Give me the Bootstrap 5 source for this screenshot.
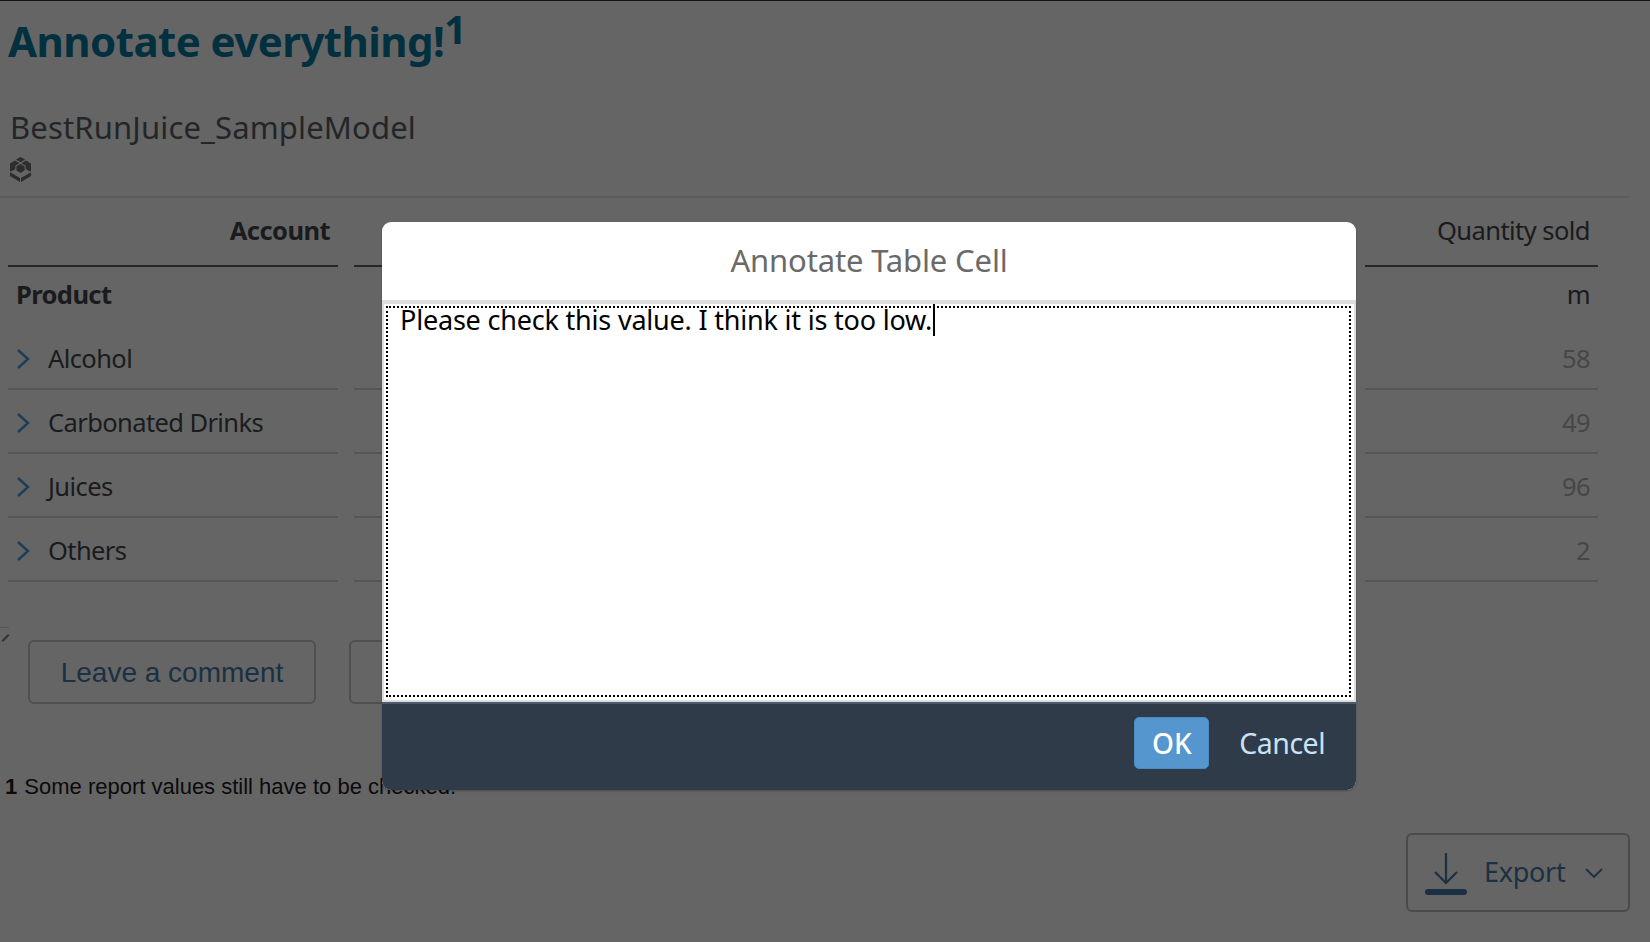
<!DOCTYPE html>
<html lang="en">
<head>
    <meta charset="UTF-8">
    <meta name="viewport" content="width=device-width, initial-scale=1.0">
    <title>Annotate everything!</title>
    <link href="https://cdn.jsdelivr.net/npm/bootstrap@5.3.0/dist/css/bootstrap.min.css" rel="stylesheet">
    <style>
        html, body { height: 100%; }
        body { background: #656565; font-family: "Noto Sans", "Open Sans", sans-serif; color: #191b1d; overflow: hidden; border-top: 1px solid #111; }
        .page-area { height: 941px; position: relative; padding: 15px 0 0 8px; }
        .story-title { font-size: 42px; font-weight: 700; color: #03303f; line-height: 50px; margin: 0; letter-spacing: -.55px; }
        .story-title sup { font-size: 39px; top: -.33em; line-height: 0; font-weight: 700; }
        .model-name { font-size: 31px; line-height: 40px; color: #232527; margin: 41px 0 0 2px; letter-spacing: .15px; }
        .model-icon { display: block; margin: 10px 0 0 2px; }
        .head-rule { height: 2px; background: #5c5c5c; margin: 14px 21px 0 -8px; }
        .data-grid { display: grid; grid-template-columns: 330px 1fr 233px; column-gap: 16px; width: 1590px; }
        .grid-col { min-width: 0; }
        .head-cell { height: 69px; border-bottom: 2px solid #22282d; display: flex; align-items: center; justify-content: flex-end; padding: 0 8px 3px; font-size: 25.5px; letter-spacing: -.55px; }
        .head-cell.account { font-weight: 700; }
        .row-cell { height: 64px; display: flex; align-items: center; padding: 3px 8px 0; font-size: 25.5px; letter-spacing: -.6px; border-bottom: 2px solid #565656; }
        .row-cell.unit { border-bottom: 0; height: 59px; font-weight: 700; padding: 0 8px 4px; }
        .row-cell.value { justify-content: flex-end; color: #454749; }
        .row-cell svg { margin-right: 17px; flex: none; }
        .action-row { display: flex; gap: 33px; margin: 58px 0 0 20px; }
        .action-btn { height: 64px; width: 288px; background: transparent; border: 2px solid #4f4f4f; border-radius: 6px; color: #1b3042; font-family: "Liberation Sans", Arial, sans-serif; font-size: 28px; padding: 1px 0 0; }
        .footnote { font-family: "Liberation Sans", Arial, sans-serif; font-size: 22px; line-height: 26px; color: #0b0b0b; margin: 70px 0 0 -3px; }
        .footnote b { margin-right: 1px; }
        .export-btn { position: absolute; right: 20px; top: 832px; width: 224px; height: 79px; border: 2px solid #4b4b4b; border-radius: 6px; color: #1b3042; font-size: 27px; letter-spacing: -.3px; background: transparent; padding: 0 0 0 16px; }
        .export-chevron { margin-left: 19px; }
        .tick-mark { position: absolute; left: 1px; top: 636px; width: 9px; height: 2px; background: #333; transform: rotate(-45deg); }
        .tick-line { position: absolute; left: 0; top: 626px; width: 9px; height: 1px; background: #555; }
        .annotate-dialog { position: absolute; left: 382px; top: 221px; width: 974px; height: 568px; border-radius: 9px; overflow: hidden; background: #fff; display: flex; flex-direction: column; box-shadow: 0 1px 2px rgba(0,0,0,.25); }
        .dialog-title { height: 78px; display: flex; align-items: center; justify-content: center; font-size: 31px; color: #6a6a6a; letter-spacing: -.15px; padding-bottom: 2px; flex: none; }
        .dialog-body { flex: 1; border-top: 4px solid #dedede; border-left: 2px solid #ddd; border-right: 2px solid #ddd; border-bottom: 2px solid #ddd; padding: 2px 3px 3px 2px; min-height: 0; }
        .dialog-editor { height: 100%; border: 2px dotted #000; font-size: 27px; line-height: 24px; padding: 0 12px; color: #000; letter-spacing: -.2px; }
        .caret-bar { display: inline-block; width: 2px; height: 32px; background: #000; vertical-align: top; margin: -4px 0 0 1px; }
        .dialog-foot { height: 88px; background: #2f3b49; border-top: 2px solid #4c5b6b; display: flex; align-items: center; justify-content: flex-end; padding: 0 31px 8px 0; gap: 30px; flex: none; }
        .ok-btn { width: 75px; height: 52px; background: #5496cd; border: 1px solid #4a8bc2; border-radius: 5px; color: #fff; font-size: 28px; padding: 0; line-height: 1; font-weight: 500; }
        .ok-btn:hover { background: #5496cd; color: #fff; }
        .cancel-btn { color: #c9e2f7; font-size: 28.5px; letter-spacing: -.5px; }
    </style>
</head>
<body>
    <div class="page-area">
        <h1 class="story-title">Annotate everything!<sup>1</sup></h1>
        <div class="model-name">BestRunJuice_SampleModel</div>
        <svg class="model-icon" width="21" height="25" viewBox="0 0 21 25">
            <path fill="#2d2d2d" d="M10.5 0 15 2.6 10.5 5.2 6 2.6ZM5 3.6 9.6 6.2 5.4 8.6 5.4 12 1 14.5 0 14V6.5ZM16 3.6 21 6.5V14L20 14.5 15.6 12V8.6L11.4 6.2ZM6.4 9.3 10.5 7 14.6 9.3V13.6L10.5 16 6.4 13.6ZM0 15.4 1 15.7 10 21V25L0 19ZM21 15.4V19L11 25V21L20 15.7Z"/>
        </svg>
        <div class="head-rule"></div>

        <div class="data-grid">
            <div class="grid-col">
                <div class="head-cell account">Account</div>
                <div class="row-cell unit">Product</div>
                <div class="row-cell"><svg width="15" height="22" viewBox="0 0 15 22"><path d="M2 2 12 11 2 20" fill="none" stroke="#1c3d5a" stroke-width="2.4"/></svg>Alcohol</div>
                <div class="row-cell"><svg width="15" height="22" viewBox="0 0 15 22"><path d="M2 2 12 11 2 20" fill="none" stroke="#1c3d5a" stroke-width="2.4"/></svg>Carbonated Drinks</div>
                <div class="row-cell"><svg width="15" height="22" viewBox="0 0 15 22"><path d="M2 2 12 11 2 20" fill="none" stroke="#1c3d5a" stroke-width="2.4"/></svg>Juices</div>
                <div class="row-cell"><svg width="15" height="22" viewBox="0 0 15 22"><path d="M2 2 12 11 2 20" fill="none" stroke="#1c3d5a" stroke-width="2.4"/></svg>Others</div>
            </div>
            <div class="grid-col">
                <div class="head-cell"></div>
                <div class="row-cell unit"></div>
                <div class="row-cell"></div>
                <div class="row-cell"></div>
                <div class="row-cell"></div>
                <div class="row-cell"></div>
            </div>
            <div class="grid-col">
                <div class="head-cell">Quantity sold</div>
                <div class="row-cell unit justify-content-end fw-normal">m</div>
                <div class="row-cell value">58</div>
                <div class="row-cell value">49</div>
                <div class="row-cell value">96</div>
                <div class="row-cell value">2</div>
            </div>
        </div>

        <div class="action-row">
            <button type="button" class="btn action-btn">Leave a comment</button>
            <button type="button" class="btn action-btn"></button>
        </div>
        <p class="footnote"><b>1</b> Some report values still have to be checked.</p>

        <span class="tick-line"></span>
        <span class="tick-mark"></span>

        <button type="button" class="btn export-btn d-flex align-items-center">
            <svg width="44" height="44" viewBox="0 0 44 44" class="me-3 flex-none">
                <path d="M22 2V32M11 21 22 32 33 21" fill="none" stroke="#1b3042" stroke-width="2.2"/>
                <rect x="1" y="38" width="42" height="6" rx="3" fill="#1b3042"/>
            </svg>
            Export
            <svg width="20" height="12" viewBox="0 0 20 12" class="export-chevron"><path d="M2 2 10 10 18 2" fill="none" stroke="#1b3042" stroke-width="1.8"/></svg>
        </button>

        <div class="annotate-dialog">
            <div class="dialog-title">Annotate Table Cell</div>
            <div class="dialog-body">
                <div class="dialog-editor">Please check this value. I think it is too low.<span class="caret-bar"></span></div>
            </div>
            <div class="dialog-foot">
                <button type="button" class="btn ok-btn">OK</button>
                <span class="cancel-btn">Cancel</span>
            </div>
        </div>
    </div>
    <script src="https://cdn.jsdelivr.net/npm/bootstrap@5.3.0/dist/js/bootstrap.bundle.min.js"></script>
</body>
</html>
